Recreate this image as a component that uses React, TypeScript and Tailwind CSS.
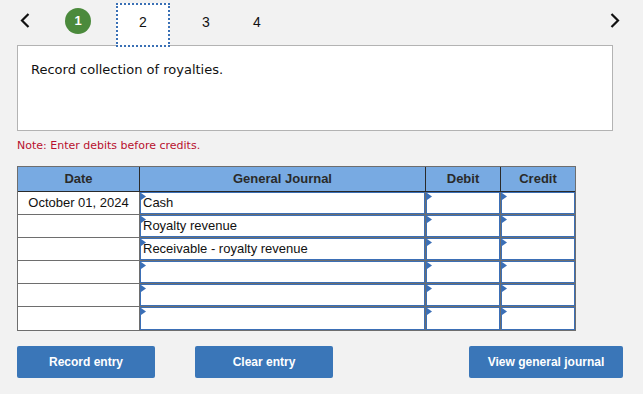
import React from 'react';

const rows = [
  { date: 'October 01, 2024', account: 'Cash' },
  { date: '', account: 'Royalty revenue' },
  { date: '', account: 'Receivable - royalty revenue' },
  { date: '', account: '' },
  { date: '', account: '' },
  { date: '', account: '' },
];

const Marker = () => (
  <svg width="5" height="7" viewBox="0 0 5 7" className="absolute left-0 top-0">
    <polygon points="0,0 5,3.5 0,7" fill="#3b6fb6" />
  </svg>
);

const InputCell: React.FC<{ width: string; text?: string; last?: boolean }> = ({ width, text, last }) => (
  <div className={`${width} h-full ${last ? '' : 'border-r border-[#6e6e6e]'}`}>
    <div className="relative h-full border border-[#3b6fb6] bg-white pl-[2px] flex items-center text-[13px] text-[#111]">
      <Marker />
      {text}
    </div>
  </div>
);

export default function App() {
  return (
    <div className="w-[643px] h-[394px] bg-[#f2f2f2] overflow-hidden" style={{ fontFamily: '"Liberation Sans", Arial, sans-serif' }}>
      {/* step nav */}
      <div className="relative z-10 flex items-start h-[45px]">
        <svg width="10" height="15" viewBox="0 0 10 15" className="ml-[20px] mt-[13px]">
          <polyline points="8.5,1 2,7.5 8.5,14" fill="none" stroke="#111" strokeWidth="2.2" />
        </svg>
        <div className="ml-[35px] mt-[8px] w-[26px] h-[26px] rounded-full bg-[#4b8a3c] text-white text-[13px] font-bold flex items-center justify-center">
          1
        </div>
        <div className="ml-[25px] mt-[3px] w-[54px] h-[44px] bg-white border-2 border-dotted border-[#3a70b5] flex justify-center pt-[7px] text-[14px] text-[#111]">
          2
        </div>
        <div className="ml-[26px] mt-[12px] w-[20px] text-center text-[14px] text-[#111]">3</div>
        <div className="ml-[31px] mt-[12px] w-[20px] text-center text-[14px] text-[#111]">4</div>
        <svg width="10" height="15" viewBox="0 0 10 15" className="ml-auto mr-[23px] mt-[13px]">
          <polyline points="1.5,1 8,7.5 1.5,14" fill="none" stroke="#111" strokeWidth="2.2" />
        </svg>
      </div>

      {/* question box */}
      <div
        className="ml-[17px] w-[596px] h-[86px] border border-[#b3b3b3] bg-white px-[13px] pt-[14px] text-[13px] text-[#111]"
        style={{ fontFamily: '"DejaVu Sans", Verdana, sans-serif' }}
      >
        Record collection of royalties.
      </div>

      <div
        className="ml-[17px] mt-[7px] text-[11px] text-[#b8102e]"
        style={{ fontFamily: '"DejaVu Sans", Verdana, sans-serif' }}
      >
        Note: Enter debits before credits.
      </div>

      {/* journal table */}
      <div className="ml-[17px] mt-[11px] w-[559px] border border-[#6e6e6e]">
        <div className="flex h-[25px] bg-[#78aae2] border-b border-[#2a2a2a] text-[13px] font-bold text-[#2a2a2a]">
          <div className="w-[122px] border-r border-[#2a2a2a] flex items-center justify-center">Date</div>
          <div className="w-[286px] border-r border-[#2a2a2a] flex items-center justify-center">General Journal</div>
          <div className="w-[75px] border-r border-[#2a2a2a] flex items-center justify-center">Debit</div>
          <div className="flex-1 flex items-center justify-center">Credit</div>
        </div>
        {rows.map((r, i) => (
          <div key={i} className={`flex h-[23px] bg-white ${i < rows.length - 1 ? 'border-b border-[#6e6e6e]' : ''}`}>
            <div className="w-[122px] h-full border-r border-[#6e6e6e] flex items-center justify-center text-[13px] text-[#111]">
              {r.date}
            </div>
            <InputCell width="w-[286px]" text={r.account} />
            <InputCell width="w-[75px]" />
            <InputCell width="flex-1" last />
          </div>
        ))}
      </div>

      {/* actions */}
      <div className="flex mt-[15px] h-[32px]">
        <button className="ml-[17px] w-[138px] h-full rounded-[2px] bg-[#3a76b8] text-white text-[12px] font-bold">
          Record entry
        </button>
        <button className="ml-[40px] w-[138px] h-full rounded-[2px] bg-[#3a76b8] text-white text-[12px] font-bold">
          Clear entry
        </button>
        <button className="ml-auto mr-[20px] w-[154px] h-full rounded-[2px] bg-[#3a76b8] text-white text-[12px] font-bold">
          View general journal
        </button>
      </div>
    </div>
  );
}
